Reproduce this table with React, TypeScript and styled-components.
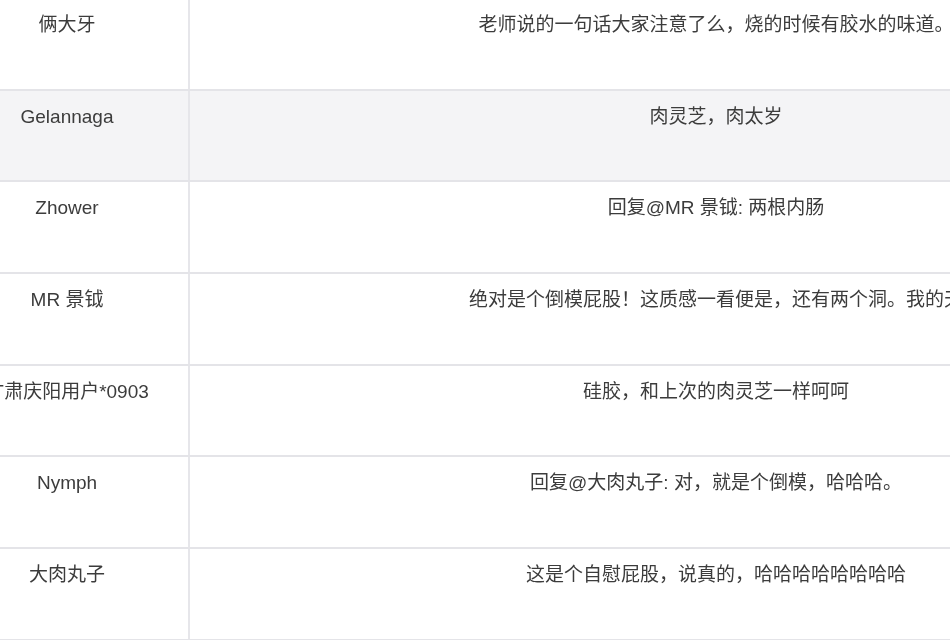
import React from 'react'
import styled, { createGlobalStyle } from 'styled-components'

const GlobalStyle = createGlobalStyle`
  html, body {
    margin: 0;
    padding: 0;
    background: #fff;
    overflow: hidden;
  }
  body {
    width: 950px;
    height: 640px;
    font-family: "Liberation Sans", "Noto Sans CJK SC", sans-serif;
  }
`

const Viewport = styled.div`
  width: 950px;
  height: 640px;
  overflow: hidden;
`

const Table = styled.div`
  display: flex;
  flex-direction: column;
  width: 1296px;
  margin-left: -54px;
  margin-top: -1px;
`

interface RowProps {
  shaded?: boolean
}

const Row = styled.div<RowProps>`
  display: grid;
  grid-template-columns: 244px 1fr;
  height: 91.7px;
  box-sizing: border-box;
  border-bottom: 2px solid #e4e4e8;
  background: ${({ shaded }) => (shaded ? '#f4f4f6' : '#fff')};
`

const Cell = styled.div`
  padding-top: 12px;
  text-align: center;
  font-size: 19px;
  line-height: 28px;
  color: #3c3c3c;
  white-space: nowrap;
  filter: blur(0.35px);
`

const NameCell = styled(Cell)`
  border-right: 2px solid #e6e6ea;
`

const comments = [
  { name: '俩大牙', text: '老师说的一句话大家注意了么，烧的时候有胶水的味道。' },
  { name: 'Gelannaga', text: '肉灵芝，肉太岁', shaded: true },
  { name: 'Zhower', text: '回复@MR 景钺: 两根内肠' },
  { name: 'MR 景钺', text: '绝对是个倒模屁股！这质感一看便是，还有两个洞。我的天' },
  { name: '甘肃庆阳用户*0903', text: '硅胶，和上次的肉灵芝一样呵呵' },
  { name: 'Nymph', text: '回复@大肉丸子: 对，就是个倒模，哈哈哈。' },
  { name: '大肉丸子', text: '这是个自慰屁股，说真的，哈哈哈哈哈哈哈哈' },
]

export default function App() {
  return (
    <Viewport>
      <GlobalStyle />
      <Table>
        {comments.map((c) => (
          <Row key={c.name} shaded={c.shaded}>
            <NameCell>{c.name}</NameCell>
            <Cell>{c.text}</Cell>
          </Row>
        ))}
      </Table>
    </Viewport>
  )
}
